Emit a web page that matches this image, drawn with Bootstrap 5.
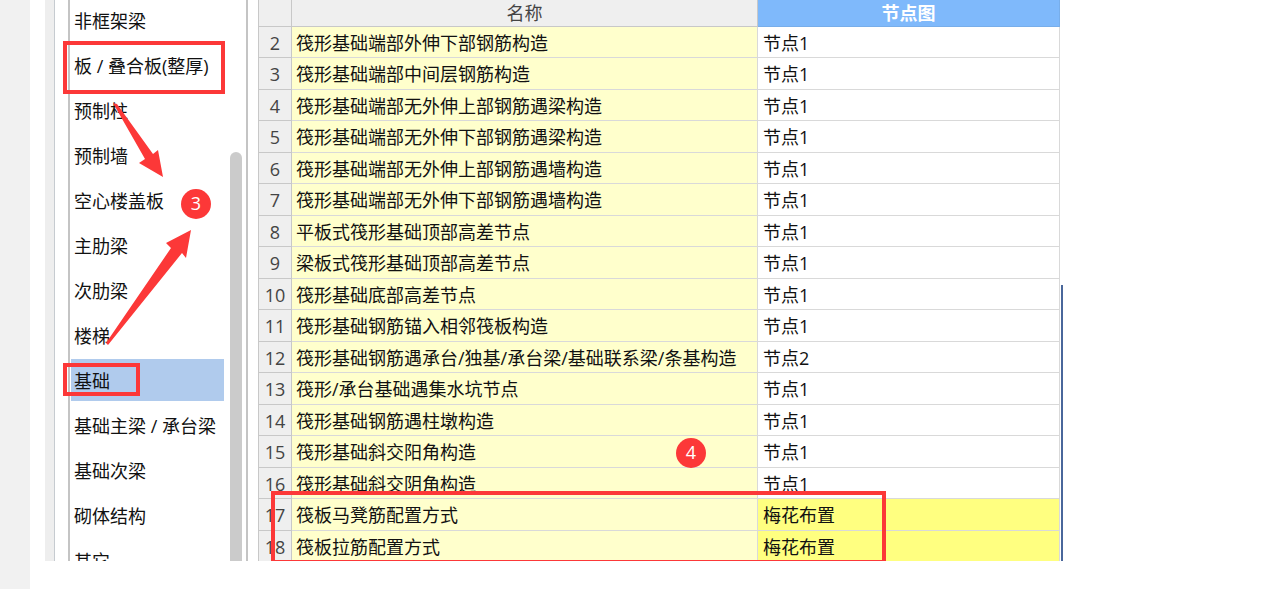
<!DOCTYPE html>
<html lang="zh-CN">
<head>
<meta charset="utf-8">
<meta name="viewport" content="width=device-width, initial-scale=1">
<title>节点设置</title>
<link href="https://cdn.jsdelivr.net/npm/bootstrap@5.3.0/dist/css/bootstrap.min.css" rel="stylesheet">
<style>
  body { font: 18px/24px "Open Sans", "Noto Sans CJK SC", sans-serif; color: #111; background: #fff; }
  .gutter { width: 30px; background: #f1f1f1; }
  .figure-area { padding: 0 207px 28px 15px; min-width: 0; }
  .edge { width: 10px; background: #eee; border-right: 1px solid #c6cbd0; }
  .side { width: 193px; padding-left: 13px; }
  .side-inner { border-left: 2px solid #c4c4c4; border-right: 2px solid #c4c4c4; padding-left: 1px; }
  .cats { width: 153px; gap: 3px; margin-top: -1px; }
  .cats .nav-link { height: 42px; flex: none; padding: 10px 0 0 3px; color: #111; white-space: nowrap; }
  .cats .nav-link.active { background: #b0cbed; }
  .thumb { width: 12px; margin: 152px 4px 0 6px; background: #cbcbcb; border-radius: 6px 6px 0 0; }
  .grid-wrap { padding-left: 10px; min-width: 0; }
  .grid { table-layout: fixed; border-collapse: separate; border-spacing: 0; border-left: 1px solid #c8c8c8; width: 100%; }
  .grid th, .grid td { height: 31px; padding: 1px 4px 0; border-right: 1px solid #d9d9d9; border-bottom: 1px solid #d9d9d9; white-space: nowrap; overflow: hidden; font-weight: 400; vertical-align: middle; }
  .grid td + td { padding-left: 5px; }
  .grid tbody tr:nth-child(even) > * { height: 32px; }
  .grid thead th { height: 27px; padding-top: 0; background: #efefef; color: #444; text-align: center; border-color: #c8c8c8; }
  .grid thead th.picked { background: #7fb9fb; color: #fff; font-weight: 700; border-color: #78aeea; }
  .grid tbody th { background: #efefef; color: #444; text-align: center; padding: 1px 0 0; border-color: #c8c8c8; }
  .grid .name { background: #ffffcc; }
  .grid .changed { background: #ffff80; }
  .col-no { width: 33px; }
  .col-node { width: 302px; }
  .pane-line { width: 2px; margin: 285px 0 0 1px; background: #4a679b; }
  .box { position: absolute; border: 4px solid #fc3838; }
  .box-slab { left: 18px; top: 41px; width: 162px; height: 53px; }
  .box-base { left: 18px; top: 363px; width: 77px; height: 33px; }
  .box-mode { left: 226px; top: 491px; width: 615px; bottom: 0; border-bottom-width: 1px; }
  .step { position: absolute; width: 30px; height: 30px; border-radius: 50%; background: #fc3838; color: #fff; line-height: 29px; text-align: center; }
  .step-3 { left: 136px; top: 189px; }
  .step-4 { left: 631px; top: 438px; }
  .arrows { position: absolute; left: 0; top: 0; }
</style>
</head>
<body>
<div class="d-flex vh-100 overflow-hidden">
  <div class="gutter flex-shrink-0"></div>
  <main class="figure-area flex-grow-1 d-flex">
    <div class="position-relative d-flex flex-grow-1 overflow-hidden">
      <div class="edge flex-shrink-0"></div>
      <div class="side d-flex flex-shrink-0">
        <div class="side-inner d-flex flex-grow-1">
          <nav class="cats nav flex-column flex-nowrap" aria-label="构件类型">
            <a class="nav-link" href="#">非框架梁</a>
            <a class="nav-link" href="#">板 / 叠合板(整厚)</a>
            <a class="nav-link" href="#">预制柱</a>
            <a class="nav-link" href="#">预制墙</a>
            <a class="nav-link" href="#">空心楼盖板</a>
            <a class="nav-link" href="#">主肋梁</a>
            <a class="nav-link" href="#">次肋梁</a>
            <a class="nav-link" href="#">楼梯</a>
            <a class="nav-link active" aria-current="true" href="#">基础</a>
            <a class="nav-link" href="#">基础主梁 / 承台梁</a>
            <a class="nav-link" href="#">基础次梁</a>
            <a class="nav-link" href="#">砌体结构</a>
            <a class="nav-link" href="#">其它</a>
          </nav>
          <div class="thumb"></div>
        </div>
      </div>
      <div class="grid-wrap flex-grow-1">
        <table class="grid">
          <colgroup><col class="col-no"><col><col class="col-node"></colgroup>
          <thead>
            <tr><th></th><th scope="col">名称</th><th scope="col" class="picked">节点图</th></tr>
          </thead>
          <tbody>
            <tr><th scope="row">2</th><td class="name">筏形基础端部外伸下部钢筋构造</td><td>节点1</td></tr>
            <tr><th scope="row">3</th><td class="name">筏形基础端部中间层钢筋构造</td><td>节点1</td></tr>
            <tr><th scope="row">4</th><td class="name">筏形基础端部无外伸上部钢筋遇梁构造</td><td>节点1</td></tr>
            <tr><th scope="row">5</th><td class="name">筏形基础端部无外伸下部钢筋遇梁构造</td><td>节点1</td></tr>
            <tr><th scope="row">6</th><td class="name">筏形基础端部无外伸上部钢筋遇墙构造</td><td>节点1</td></tr>
            <tr><th scope="row">7</th><td class="name">筏形基础端部无外伸下部钢筋遇墙构造</td><td>节点1</td></tr>
            <tr><th scope="row">8</th><td class="name">平板式筏形基础顶部高差节点</td><td>节点1</td></tr>
            <tr><th scope="row">9</th><td class="name">梁板式筏形基础顶部高差节点</td><td>节点1</td></tr>
            <tr><th scope="row">10</th><td class="name">筏形基础底部高差节点</td><td>节点1</td></tr>
            <tr><th scope="row">11</th><td class="name">筏形基础钢筋锚入相邻筏板构造</td><td>节点1</td></tr>
            <tr><th scope="row">12</th><td class="name">筏形基础钢筋遇承台/独基/承台梁/基础联系梁/条基构造</td><td>节点2</td></tr>
            <tr><th scope="row">13</th><td class="name">筏形/承台基础遇集水坑节点</td><td>节点1</td></tr>
            <tr><th scope="row">14</th><td class="name">筏形基础钢筋遇柱墩构造</td><td>节点1</td></tr>
            <tr><th scope="row">15</th><td class="name">筏形基础斜交阳角构造</td><td>节点1</td></tr>
            <tr><th scope="row">16</th><td class="name">筏形基础斜交阴角构造</td><td>节点1</td></tr>
            <tr><th scope="row">17</th><td class="name">筏板马凳筋配置方式</td><td class="changed">梅花布置</td></tr>
            <tr><th scope="row">18</th><td class="name">筏板拉筋配置方式</td><td class="changed">梅花布置</td></tr>
          </tbody>
        </table>
      </div>
      <div class="pane-line flex-shrink-0"></div>

      <!-- Tutorial marks laid over the dialog -->
      <div class="box box-slab"></div>
      <div class="box box-base"></div>
      <div class="box box-mode"></div>
      <svg class="arrows" width="190" height="360" viewBox="45 0 190 360" fill="#fc3838" aria-hidden="true">
        <path d="M113 103L117 104L153 154L158 150L163 177L139 163L145 159Z"/>
        <path d="M106 343L171 248L166 243L191 230L186 258L182 253L108 345Z"/>
      </svg>
      <div class="step step-3">3</div>
      <div class="step step-4">4</div>
    </div>
  </main>
</div>
<script src="https://cdn.jsdelivr.net/npm/bootstrap@5.3.0/dist/js/bootstrap.bundle.min.js"></script>
</body>
</html>
